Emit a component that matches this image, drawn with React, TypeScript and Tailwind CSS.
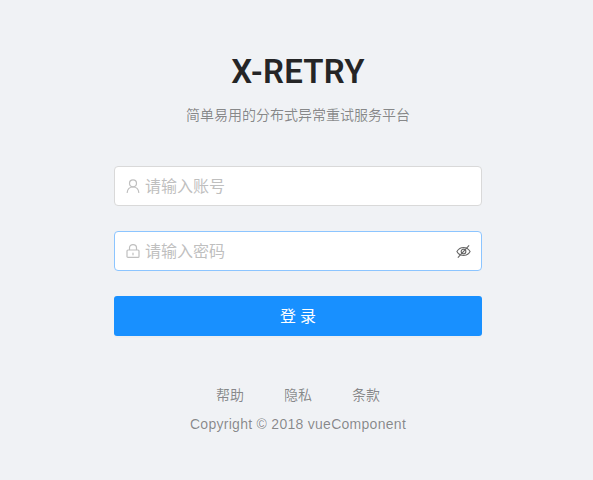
const font = "font-['Roboto','Noto_Sans_CJK_SC',sans-serif]"

function UserIcon() {
  return (
    <svg viewBox="0 0 14 14" className="size-[14px] text-[#bfbfbf] shrink-0" fill="none" stroke="currentColor" strokeWidth="1.2">
      <circle cx="7" cy="4.300" r="3.500" />
      <path d="M1.200 13.500C1.500 10.300 3.800 8 7 8s5.500 2.300 5.800 5.500" strokeLinecap="round" />
    </svg>
  )
}

function LockIcon() {
  return (
    <svg viewBox="0 0 14 14" className="size-[14px] text-[#bfbfbf] shrink-0" fill="none" stroke="currentColor" strokeWidth="1.2">
      <rect x="1" y="6" width="12" height="7.400" rx="1" />
      <path d="M3.500 6V3.800C3.500 1.900 5 .7 7 .7s3.500 1.200 3.500 3.100V6" />
      <path d="M7 9v1.800" strokeLinecap="round" />
    </svg>
  )
}

function EyeOff() {
  return (
    <svg viewBox="0 0 16 16" className="size-[15px] text-[#666] shrink-0" fill="none" stroke="currentColor" strokeWidth="1.200">
      <path d="M1 8c1.700-2.900 4-4.300 7-4.300s5.300 1.400 7 4.300c-1.700 2.900-4 4.300-7 4.300S2.700 10.900 1 8z" />
      <circle cx="8" cy="8" r="2.500" />
      <path d="M14 1.500 2 14.500" />
    </svg>
  )
}

export default function App() {
  return (
    <div className={`${font} min-h-[480px] bg-[#f0f2f5] flex flex-col items-center pt-[50px] pl-[3px]`}>
      <h1 className="text-[33px] leading-[44px] font-semibold tracking-[0.2px] text-[rgba(0,0,0,0.85)]">X-RETRY</h1>
      <p className="mt-[10px] text-sm leading-[22px] text-[rgba(0,0,0,0.45)]">简单易用的分布式异常重试服务平台</p>

      <form className="mt-[40px] w-[368px] flex flex-col">
        <div className="h-10 bg-white border border-[#d9d9d9] rounded-[4px] flex items-center px-[11px]">
          <UserIcon />
          <input
            placeholder="请输入账号"
            className="ml-[5px] pt-px flex-1 min-w-0 outline-none text-base text-[rgba(0,0,0,0.65)] placeholder:text-[#bfbfbf]"
          />
        </div>
        <div className="mt-[25px] h-10 bg-white border border-[#8cc5ff] rounded-[4px] flex items-center pl-[11px] pr-[10px]">
          <LockIcon />
          <input
            placeholder="请输入密码"
            className="ml-[5px] pt-px flex-1 min-w-0 outline-none text-base text-[rgba(0,0,0,0.65)] placeholder:text-[#bfbfbf]"
          />
          <EyeOff />
        </div>
        <button
          type="button"
          className="mt-[25px] h-10 pt-px bg-[#1890ff] rounded-[3px] text-white text-base shadow-[0_2px_0_rgba(0,0,0,0.015)]"
        >
          登 录
        </button>
      </form>

      <div className="mt-[48px] flex gap-10 text-sm leading-[22px] text-[rgba(0,0,0,0.45)]">
        <span>帮助</span>
        <span>隐私</span>
        <span>条款</span>
      </div>
      <div className="mt-[7px] text-sm leading-[22px] tracking-[0.28px] text-[rgba(0,0,0,0.45)] font-['Liberation_Sans',sans-serif]">Copyright © 2018 vueComponent</div>
    </div>
  )
}
